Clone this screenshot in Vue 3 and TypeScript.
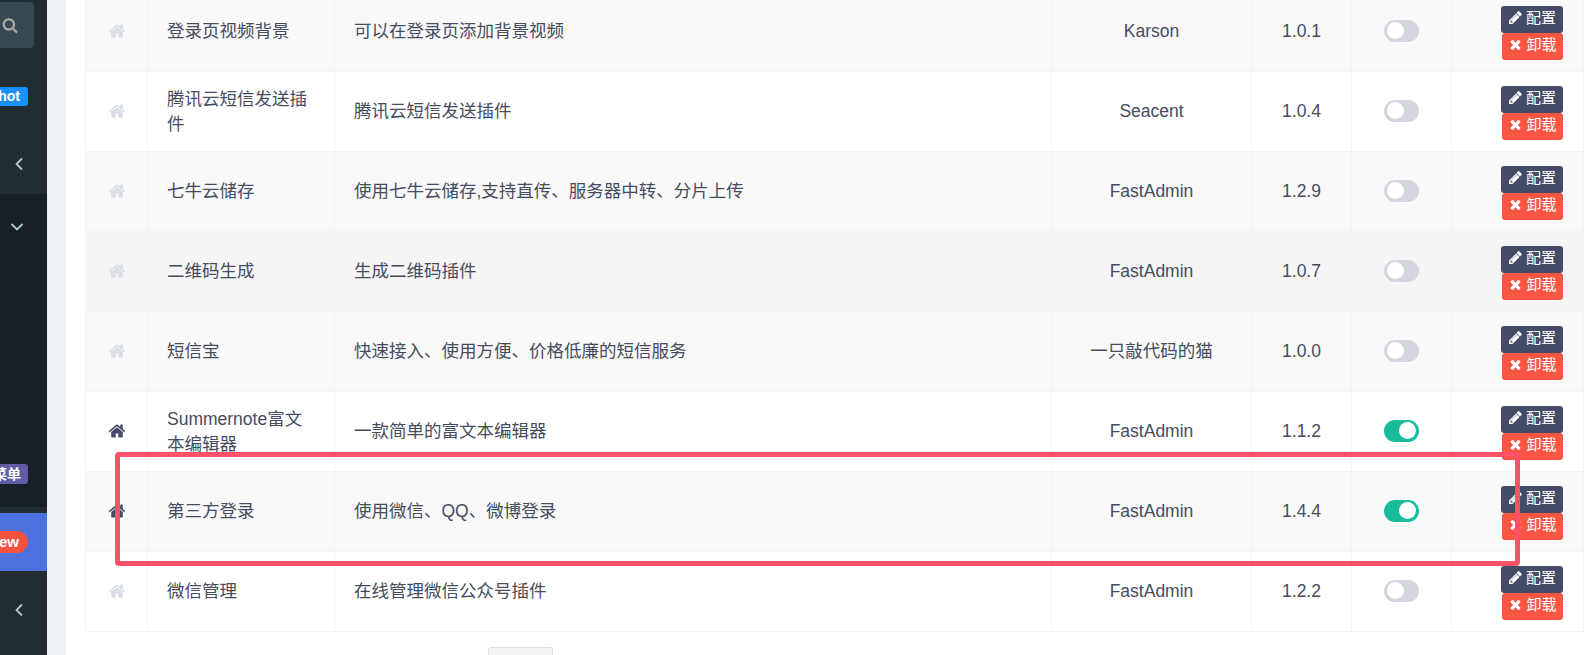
<script setup lang="ts">
interface Addon {
  name: string
  desc: string
  author: string
  version: string
  enabled: boolean
  hover?: boolean
}

const addons: Addon[] = [
  { name: '登录页视频背景', desc: '可以在登录页添加背景视频', author: 'Karson', version: '1.0.1', enabled: false },
  { name: '腾讯云短信发送插件', desc: '腾讯云短信发送插件', author: 'Seacent', version: '1.0.4', enabled: false },
  { name: '七牛云储存', desc: '使用七牛云储存,支持直传、服务器中转、分片上传', author: 'FastAdmin', version: '1.2.9', enabled: false },
  { name: '二维码生成', desc: '生成二维码插件', author: 'FastAdmin', version: '1.0.7', enabled: false, hover: true },
  { name: '短信宝', desc: '快速接入、使用方便、价格低廉的短信服务', author: '一只敲代码的猫', version: '1.0.0', enabled: false },
  { name: 'Summernote富文本编辑器', desc: '一款简单的富文本编辑器', author: 'FastAdmin', version: '1.1.2', enabled: true },
  { name: '第三方登录', desc: '使用微信、QQ、微博登录', author: 'FastAdmin', version: '1.4.4', enabled: true },
  { name: '微信管理', desc: '在线管理微信公众号插件', author: 'FastAdmin', version: '1.2.2', enabled: false },
]

const homePath = 'M1472 992v480q0 26-19 45t-45 19h-384v-384h-256v384h-384q-26 0-45-19t-19-45v-480q0-1 .5-3t.5-3l575-474 575 474q1 2 1 6zm223-69l-62 74q-8 9-21 11h-3q-13 0-21-7l-692-577-692 577q-12 8-24 7-13-2-21-11l-62-74q-8-10-7-23.5t11-21.5l719-599q32-26 76-26t76 26l244 204v-195q0-14 9-23t23-9h192q14 0 23 9t9 23v408l219 182q10 8 11 21.5t-7 23.5z'
const pencilPath = 'M491 1536l91-91-235-235-91 91v107h128v128h107zm523-928q0-22-22-22-10 0-17 7l-542 542q-7 7-7 17 0 22 22 22 10 0 17-7l542-542q7-7 7-17zm-54-192l416 416-832 832h-416v-416zm683 96q0 53-37 90l-166 166-416-416 166-165q36-38 90-38 53 0 91 38l235 234q37 39 37 91z'
const timesPath = 'M1490 1322q0 40-28 68l-136 136q-28 28-68 28t-68-28l-294-294-294 294q-28 28-68 28t-68-28l-136-136q-28-28-28-68t28-68l294-294-294-294q-28-28-28-68t28-68l136-136q28-28 68-28t68 28l294 294 294-294q28-28 68-28t68 28l136 136q28 28 28 68t-28 68l-294 294 294 294q28 28 28 68z'
const searchPath = 'M1216 832q0-185-131.5-316.5t-316.5-131.5-316.5 131.5-131.5 316.5 131.5 316.5 316.5 131.5 316.5-131.5 131.5-316.5zm512 832q0 52-38 90t-90 38q-54 0-90-38l-343-342q-179 124-399 124-143 0-273.5-55.5t-225-150-150-225-55.5-273.5 55.5-273.5 150-225 225-150 273.5-55.5 273.5 55.5 225 150 150 225 55.5 273.5q0 220-124 399l343 343q37 37 37 90z'
</script>

<template>
  <div class="page">
    <aside class="sidebar">
      <div class="side-top">
        <div class="search">
          <svg class="search-icon" viewBox="0 0 1792 1792"><path :d="searchPath" /></svg>
        </div>
        <div class="badge-row hot-row"><span class="badge hot">hot</span></div>
        <svg class="chevron chevron-a" viewBox="0 0 10 14"><path d="M8 1.5 2.5 7 8 12.5" /></svg>
      </div>
      <div class="side-dark">
        <svg class="chevron-down" viewBox="0 0 14 10"><path d="M1.5 2 7 7.5 12.5 2" /></svg>
        <div class="badge-row menu-row"><span class="badge menu">菜单</span></div>
      </div>
      <div class="side-active">
        <span class="badge new">new</span>
      </div>
      <div class="side-bottom">
        <svg class="chevron" viewBox="0 0 10 14"><path d="M8 1.5 2.5 7 8 12.5" /></svg>
      </div>
    </aside>

    <main class="gutter">
      <div class="panel">
        <table class="addons">
          <colgroup>
            <col style="width: 62px" />
            <col style="width: 187px" />
            <col style="width: 717px" />
            <col style="width: 200px" />
            <col style="width: 100px" />
            <col style="width: 100px" />
            <col style="width: 132px" />
          </colgroup>
          <tbody>
            <tr v-for="(a, i) in addons" :key="a.name" :class="{ striped: i % 2 === 0, hovered: a.hover }">
              <td class="center">
                <svg class="home" :class="{ on: a.enabled }" viewBox="0 0 1792 1792"><path :d="homePath" /></svg>
              </td>
              <td class="name">{{ a.name }}</td>
              <td class="desc">{{ a.desc }}</td>
              <td class="center">{{ a.author }}</td>
              <td class="center">{{ a.version }}</td>
              <td class="center">
                <span class="toggle" :class="{ on: a.enabled }"><i></i></span>
              </td>
              <td class="ops">
                <div class="btns">
                  <a class="btn config">
                    <svg viewBox="0 0 1792 1792"><path :d="pencilPath" /></svg>配置
                  </a>
                  <a class="btn remove">
                    <svg viewBox="0 0 1792 1792"><path :d="timesPath" /></svg>卸载
                  </a>
                </div>
              </td>
            </tr>
          </tbody>
        </table>
        <div class="pager"><span class="page-btn"></span></div>
      </div>
    </main>

    <div class="annotation"></div>
  </div>
</template>

<style scoped>
.page {
  position: relative;
  display: flex;
  height: 655px;
  overflow: hidden;
  font-family: "Liberation Sans", "Noto Sans CJK SC", sans-serif;
  font-size: 17.5px;
  line-height: 25px;
  color: #464c60;
  background: #fff;
}

.sidebar {
  width: 47px;
  flex: none;
  display: flex;
  flex-direction: column;
  overflow: hidden;
  background: #222d32;
}
.side-top {
  height: 194px;
  flex: none;
  padding-top: 2px;
  box-sizing: border-box;
  display: flex;
  flex-direction: column;
  align-items: flex-end;
}
.search {
  width: 34px;
  height: 46px;
  margin-right: 13px;
  align-self: flex-start;
  border-radius: 0 4px 4px 0;
  background: #374850;
  display: flex;
  align-items: center;
}
.search-icon {
  width: 16px;
  height: 16px;
  margin-left: 2px;
  fill: #a9a9a4;
}
.badge-row {
  display: flex;
  justify-content: flex-end;
  width: 100%;
  padding-right: 19px;
  box-sizing: border-box;
}
.hot-row {
  margin-top: 39px;
}
.badge {
  flex: none;
  color: #fff;
  font-weight: 700;
  font-size: 14px;
  border-radius: 3px;
  white-space: nowrap;
}
.hot {
  background: #1890ff;
  height: 19px;
  line-height: 19px;
  padding: 0 8px;
}
.chevron {
  width: 10px;
  height: 14px;
  fill: none;
  stroke: #b8c7ce;
  stroke-width: 1.8;
}
.chevron-a {
  align-self: flex-start;
  margin: 51px 0 0 14px;
}
.side-dark {
  height: 313px;
  flex: none;
  background: #172024;
  display: flex;
  flex-direction: column;
}
.chevron-down {
  width: 14px;
  height: 10px;
  margin: 28px 0 0 10px;
  fill: none;
  stroke: #b8c7ce;
  stroke-width: 1.8;
}
.menu-row {
  margin-top: 232px;
}
.menu {
  background: #605ca8;
  height: 20px;
  line-height: 20px;
  padding: 0 7px;
}
.side-active {
  height: 58px;
  flex: none;
  margin-top: 6px;
  background: #4e72dd;
  display: flex;
  justify-content: flex-end;
  align-items: center;
  padding-right: 19px;
}
.new {
  background: #f5533d;
  height: 22px;
  line-height: 22px;
  padding: 0 9px;
  border-radius: 11px;
  font-size: 15px;
}
.side-bottom {
  flex: 1;
  padding: 28px 0 0 14px;
}

.gutter {
  flex: 1;
  min-width: 0;
  padding-left: 19px;
  background: #edf1f5;
}
.panel {
  height: 100%;
  background: #fff;
  padding-left: 19px;
  overflow: hidden;
}
.addons {
  table-layout: fixed;
  width: 1498px;
  margin-top: -9px;
  border-collapse: collapse;
}
.addons tr.striped td {
  background: #f9f9f9;
}
.addons tr.hovered td {
  background: #f5f5f5;
}
.addons td {
  height: 80px;
  padding: 0 20px 0 19px;
  border: 1px solid #f4f4f4;
  box-sizing: border-box;
  vertical-align: middle;
  background: #fff;
}
.addons td.center {
  padding: 0;
  text-align: center;
}
.home {
  display: block;
  margin: -2px auto 0;
  width: 18px;
  height: 18px;
  fill: #d8dde6;
}
.home.on {
  fill: #444c69;
}
.toggle {
  display: block;
  position: relative;
  margin: -2px auto 0;
  width: 35px;
  height: 22px;
  border-radius: 11px;
  background: #d2d6de;
}
.toggle i {
  position: absolute;
  top: 2.5px;
  left: 3px;
  width: 17px;
  height: 17px;
  border-radius: 50%;
  background: #fff;
}
.toggle.on {
  background: #18bc9c;
}
.toggle.on i {
  left: 15px;
}
.addons td.ops {
  padding: 2px 0 0 49px;
}
.btns {
  display: flex;
  flex-direction: column;
  align-items: flex-end;
  width: 62px;
}
.btn {
  display: flex;
  align-items: center;
  justify-content: center;
  gap: 3px;
  box-sizing: border-box;
  height: 27px;
  padding-bottom: 3px;
  border-radius: 3px;
  color: #fff;
  font-size: 15px;
  line-height: 20px;
}
.btn svg {
  width: 15px;
  height: 15px;
  fill: #fff;
}
.config {
  width: 62px;
  background: #444c69;
}
.remove {
  width: 61px;
  background: #fb5643;
}
.pager {
  padding: 15px 0 0 403px;
}
.page-btn {
  display: block;
  width: 63px;
  height: 38px;
  border: 1px solid #ddd;
  border-radius: 3px;
  background: #f5f5f5;
}

.annotation {
  position: absolute;
  left: 115px;
  top: 452px;
  width: 1405px;
  height: 114px;
  box-sizing: border-box;
  border: 5px solid #ff5267;
  border-radius: 4px;
  pointer-events: none;
}
</style>
